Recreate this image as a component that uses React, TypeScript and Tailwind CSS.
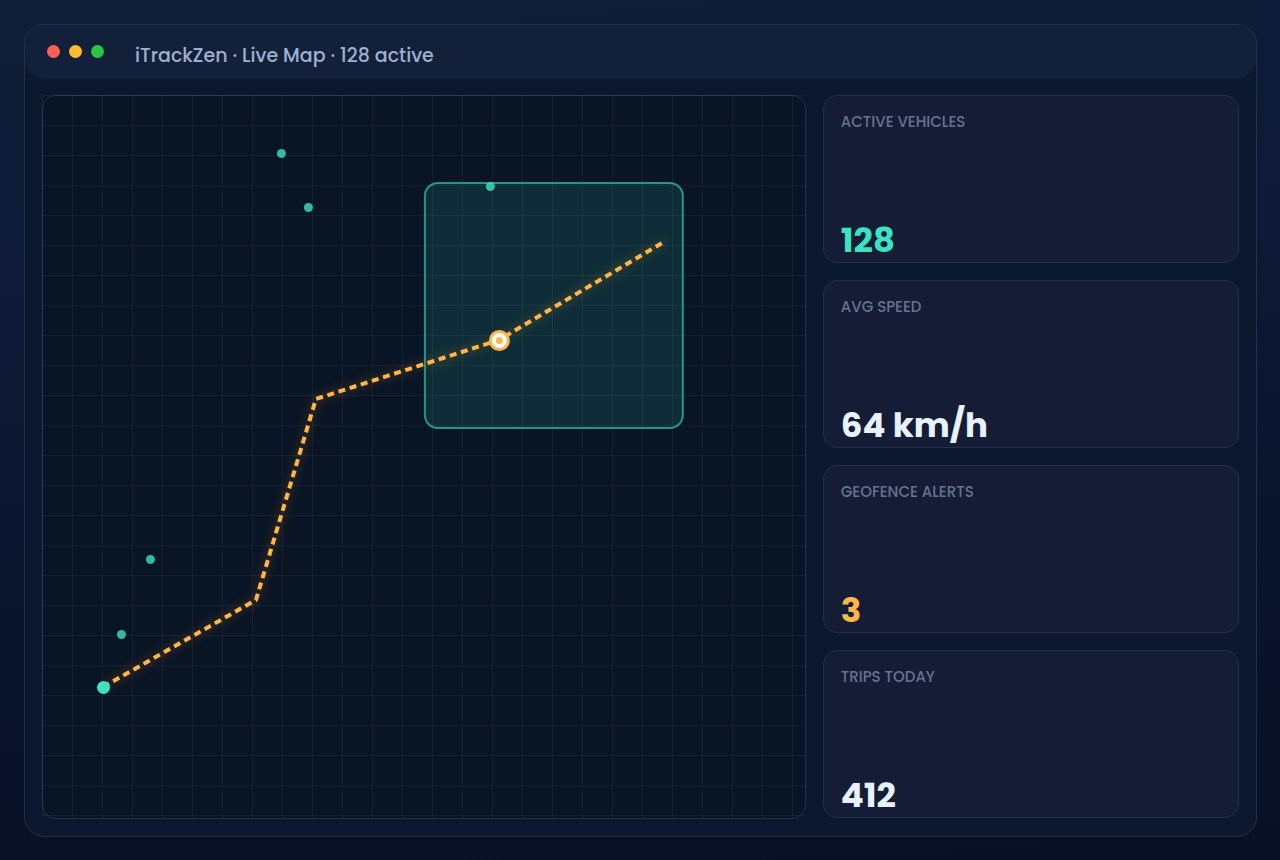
import React from "react";

interface Stat {
  label: string;
  value: string;
  color: string;
}

interface Point {
  x: number;
  y: number;
}

const STATS: Stat[] = [
  { label: "ACTIVE VEHICLES", value: "128", color: "text-[#3be3c2]" },
  { label: "AVG SPEED", value: "64 km/h", color: "text-[#e8f1ff]" },
  { label: "GEOFENCE ALERTS", value: "3", color: "text-[#ffb547]" },
  { label: "TRIPS TODAY", value: "412", color: "text-[#e8f1ff]" },
];

const VEHICLES: Point[] = [
  { x: 239, y: 58 },
  { x: 266, y: 112 },
  { x: 448, y: 91 },
  { x: 108, y: 464 },
  { x: 79, y: 539 },
];

const ROUTE = "M61 592 L214 505 L274 304 L457 245 L622 147";

const TitleBar: React.FC = () => (
  <header className="flex h-[54px] items-center gap-[9px] rounded-[20px] bg-[#13203a] px-[22px] pb-0.5">
    <span className="size-[13px] rounded-full bg-[#ff5f57]" />
    <span className="size-[13px] rounded-full bg-[#febc2e]" />
    <span className="size-[13px] rounded-full bg-[#28c840]" />
    <h1 className="mt-2.5 ml-[22px] text-[19px] leading-7 font-medium text-[#9fb0cf]">
      iTrackZen · Live Map · 128 active
    </h1>
  </header>
);

const LiveMap: React.FC = () => (
  <div className="relative min-h-[400px] rounded-[14px] border border-[#243146] bg-[#091425]">
    <div className="absolute -top-px right-0 bottom-0 -left-px bg-[linear-gradient(to_right,#ffffff0c_1px,transparent_1px),linear-gradient(to_bottom,#ffffff0c_1px,transparent_1px)] bg-size-[30px_30px]" />
    <svg
      className="absolute -inset-px size-[calc(100%+2px)]"
      viewBox="0 0 764 724"
      preserveAspectRatio="none"
      role="img"
      aria-label="Live vehicle map"
    >
      <defs>
        <filter id="glow" x="-10%" y="-10%" width="120%" height="120%">
          <feGaussianBlur stdDeviation="5" />
        </filter>
      </defs>
      <rect
        x="383"
        y="88"
        width="258"
        height="245"
        rx="13"
        fill="#3be3c2"
        fillOpacity="0.12"
        stroke="#3be3c2"
        strokeOpacity="0.6"
        strokeWidth="2"
      />
      <path d={ROUTE} fill="none" stroke="#ff9800" strokeOpacity="0.22" strokeWidth="5" filter="url(#glow)" />
      <path d={ROUTE} fill="none" stroke="#ffb547" strokeWidth="4" strokeDasharray="7 4.7" />
      {VEHICLES.map((v) => (
        <circle key={`${v.x}-${v.y}`} cx={v.x + 0.5} cy={v.y + 0.5} r="4.5" fill="#3be3c2" fillOpacity="0.8" />
      ))}
      <circle cx="61.5" cy="592.5" r="6.5" fill="#3be3c2" />
      <circle cx="457.5" cy="245.5" r="9" fill="#ffb547" stroke="#ffb547" strokeWidth="3" />
      <circle cx="457.5" cy="245.5" r="5.5" fill="#ffb547" stroke="#ffffff" strokeWidth="4" />
    </svg>
  </div>
);

const StatCard: React.FC<{ stat: Stat }> = ({ stat }) => (
  <div className="flex flex-col justify-between rounded-[14px] border border-[#242f48] bg-[#151d36] px-[17px] pt-4 pb-[2px]">
    <dt className="text-[15px] leading-5 font-medium text-[#65738f]">{stat.label}</dt>
    <dd className={`text-[34px] leading-10 font-bold ${stat.color}`}>{stat.value}</dd>
  </div>
);

export default function App() {
  return (
    <div className="flex min-h-screen flex-col bg-[linear-gradient(175deg,#0f1d39_0%,#0d1936_35%,#081126_85%,#071024_100%)] pt-6 pr-[23px] pb-[23px] pl-6 font-[Poppins,Inter,sans-serif]">
      <main className="flex flex-1 flex-col rounded-[20px] border border-[#243146] bg-[#0b182f]">
        <TitleBar />
        <div className="grid flex-1 grid-cols-[1.835fr_1fr] gap-[17px] px-[17px] pt-4 pb-[17px]">
          <LiveMap />
          <dl className="grid grid-rows-4 gap-[17px] pb-px">
            {STATS.map((stat) => (
              <StatCard key={stat.label} stat={stat} />
            ))}
          </dl>
        </div>
      </main>
    </div>
  );
}
